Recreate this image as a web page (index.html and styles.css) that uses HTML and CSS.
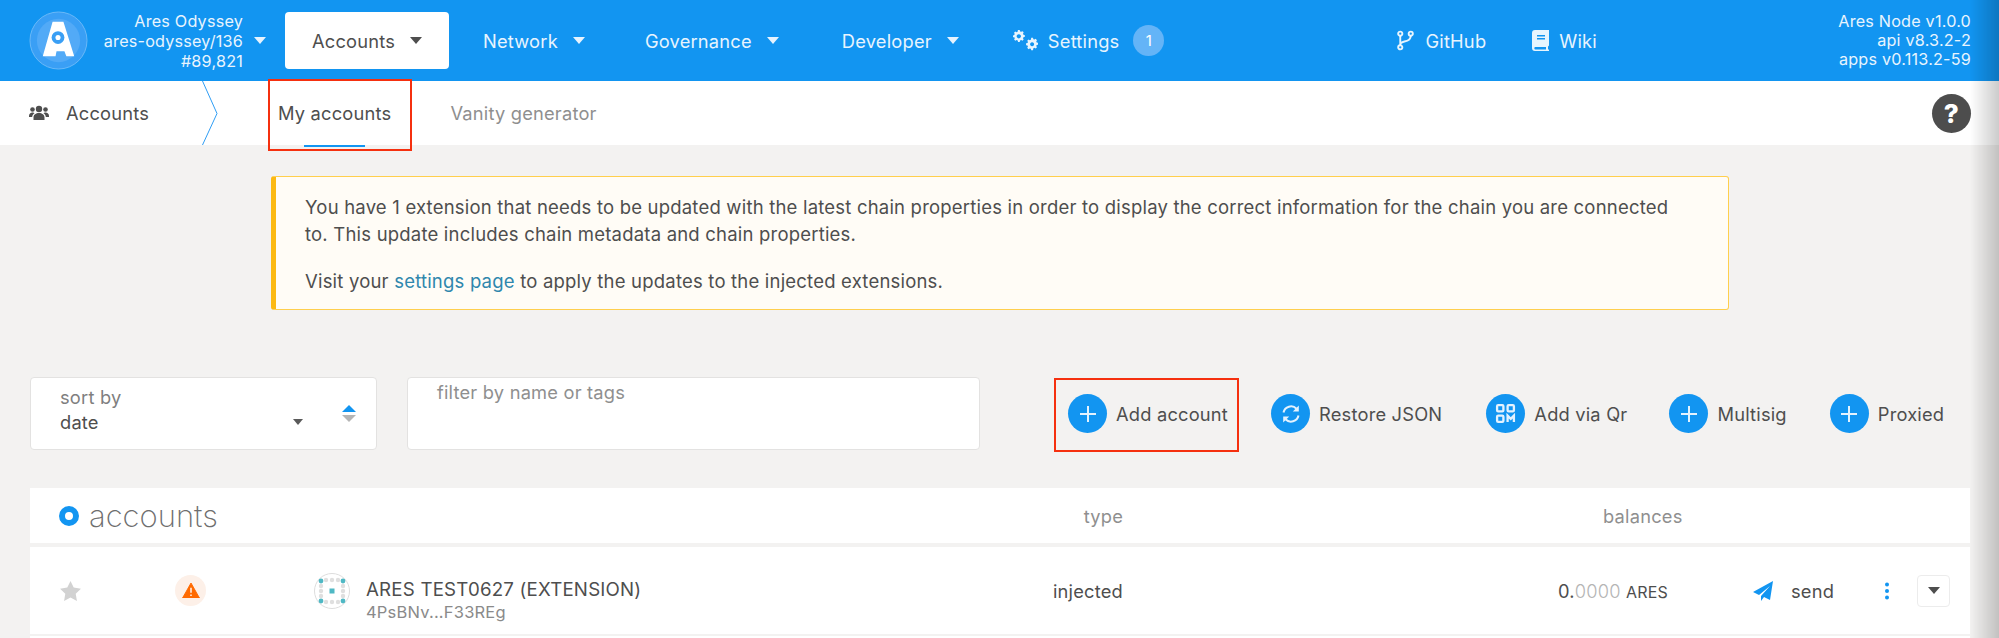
FILE: index.html
```html
<!DOCTYPE html>
<html>
  <head>
    <title>Accounts</title>
    <meta charset="utf-8"/>
    <link rel="stylesheet" href="styles.css">
  </head>
  <body>
    <header class="top">
      <svg class="logo" viewBox="0 0 60 60">
        <circle cx="30" cy="30" r="29" fill="#3a9ff5" stroke="#7cc0f8" stroke-width="0.8"/>
        <circle cx="30" cy="30" r="22" fill="#52aaf7"/>
        <path d="M24 11H35L46 46H38L36 41H28L27 46H14z" fill="#fff"/>
        <circle cx="29.500" cy="27" r="6.500" fill="#3a9ff5"/>
        <circle cx="29.500" cy="27" r="2.600" fill="#fff"/>
      </svg>
      <div class="chain">
        <div>Ares Odyssey</div>
        <div>ares-odyssey/136</div>
        <div>#89,821</div>
      </div>
      <i class="caret chain-caret"></i>
      <a class="menu active">Accounts <i class="caret"></i></a>
      <a class="menu menu-network">Network <i class="caret"></i></a>
      <a class="menu menu-gov">Governance <i class="caret"></i></a>
      <a class="menu menu-dev">Developer <i class="caret"></i></a>
      <a class="menu menu-settings">
        <svg class="gears" viewBox="0 0 25 22" fill="#fff" fill-opacity=".9">
          <path fill-rule="evenodd" d="M8 1l1.400.2.5 1.700 1.300.6 1.600-.8 1.400 1.400-.8 1.600.6 1.300 1.700.5v2l-1.700.5-.6 1.300.8 1.600-1.400 1.400-1.600-.8-1.300.6-.5 1.700h-2l-.5-1.700-1.300-.6-1.600.8-1.400-1.400.8-1.600-.6-1.300L1 9.900v-2l1.700-.5.6-1.300-.8-1.600 1.400-1.400 1.600.8 1.300-.6L7.300 1zM8.300 6.300a2.600 2.600 0 1 0 .01 0z" transform="translate(-1 -1) scale(.82)"/>
          <path fill-rule="evenodd" d="M18 8h2l.4 1.600 1.200.5 1.400-.8 1.400 1.400-.8 1.400.5 1.200 1.600.4v2l-1.600.4-.5 1.200.8 1.400-1.400 1.400-1.400-.8-1.200.5L20 22h-2l-.4-1.600-1.200-.5-1.400.8-1.400-1.400.8-1.400-.5-1.200-1.600-.4v-2l1.600-.4.5-1.200-.8-1.400 1.400-1.400 1.400.8 1.200-.5zM19 13a2.200 2.200 0 1 0 .01 0z" transform="translate(2 0.500) scale(.9)"/>
        </svg>
        Settings
        <span class="badge">1</span>
      </a>
      <a class="menu menu-github">
        <svg class="link-icon" viewBox="0 0 16 20" fill="none" stroke="#fff" stroke-opacity=".9" stroke-width="1.800">
          <circle cx="3" cy="3.500" r="2"/><circle cx="3" cy="16.500" r="2"/><circle cx="13" cy="3.500" r="2"/>
          <path d="M3 5.500v9M13 5.500c0 4-3 5-6 5.500-2 .4-4 1-4 3"/>
        </svg>
        GitHub
      </a>
      <a class="menu menu-wiki">
        <svg class="link-icon" viewBox="0 0 17 21" fill="#fff" fill-opacity=".9">
          <path fill-rule="evenodd" d="M3 0h14v15.500l-1 1v2.500l1 1V21H3a3 3 0 0 1-3-3V3a3 3 0 0 1 3-3zM5 5v1.500h8V5zM5 8v1.500h8V8zM3 17a1.500 1.500 0 0 0 0 2.500h11V17z"/>
        </svg>
        Wiki
      </a>
      <div class="version">
        <div>Ares Node v1.0.0</div>
        <div>api v8.3.2-2</div>
        <div>apps v0.113.2-59</div>
      </div>
    </header>

    <nav class="sub">
      <div class="crumb">
        <svg class="users" viewBox="0 0 20 16" fill="#4e4e4e">
          <circle cx="10" cy="4" r="3.200"/><circle cx="3.500" cy="4.500" r="2.300"/><circle cx="16.500" cy="4.500" r="2.300"/>
          <path d="M4.500 15v-2.500C4.500 9.500 7 8 10 8s5.500 1.500 5.500 4.500V15zM0 11c0-2 1.500-3.500 3.500-3.500 1 0 1.500.3 2 .7C4 9.200 3.200 10.500 3.200 12H0zM20 11c0-2-1.500-3.500-3.500-3.500-1 0-1.500.3-2 .7 1.500 1 2.300 2.300 2.300 3.800H20z"/>
        </svg>
        Accounts
      </div>
      <svg class="chevron" viewBox="0 0 16 64" fill="none" stroke="#2f9df4" stroke-width="1">
        <path d="M.5 0L15 32.500.5 64"/>
      </svg>
      <a class="tab tab-current">My accounts<span class="mark"></span></a>
      <a class="tab tab-muted">Vanity generator</a>
      <div class="help">?</div>
      <div class="redbox redbox-tab"></div>
    </nav>

    <main class="content">
      <section class="notice">
        <p>You have 1 extension that needs to be updated with the latest chain properties in order to display the correct information for the chain you are connected to. This update includes chain metadata and chain properties.</p>
        <p>Visit your <a class="notice-link">settings page</a> to apply the updates to the injected extensions.</p>
      </section>

      <section class="controls">
        <div class="field sort">
          <div class="sort-text">
            <label>sort by</label>
            <div class="sort-value">date <i class="caret caret-small"></i></div>
          </div>
          <div class="arrows"><i class="arrow-up"></i><i class="arrow-down"></i></div>
        </div>
        <div class="field filter">filter by name or tags</div>
        <div class="buttons">
          <a class="btn btn-add"><span class="disc"><svg viewBox="0 0 20 20"><path d="M10 2v16M2 10h16"/></svg></span>Add account</a>
          <a class="btn btn-restore"><span class="disc">
            <svg viewBox="0 0 20 20" class="sync"><path d="M2.500 8.500A7.700 7.700 0 0 1 15.500 4.700M17.500 11.500A7.700 7.700 0 0 1 4.500 15.300"/><path class="fill" d="M17.800 1.500v6h-6zM2.200 18.500v-6h6z"/></svg>
          </span>Restore JSON</a>
          <a class="btn btn-qr"><span class="disc">
            <svg viewBox="0 0 20 20" class="qr"><rect x="2" y="2" width="6" height="6" rx="1"/><rect x="12" y="2" width="6" height="6" rx="1"/><rect x="2" y="12" width="6" height="6" rx="1"/><path d="M12 18v-6l3 3 3-3v6"/></svg>
          </span>Add via Qr</a>
          <a class="btn btn-multi"><span class="disc"><svg viewBox="0 0 20 20"><path d="M10 2v16M2 10h16"/></svg></span>Multisig</a>
          <a class="btn btn-proxy"><span class="disc"><svg viewBox="0 0 20 20"><path d="M10 2v16M2 10h16"/></svg></span>Proxied</a>
          <div class="redbox redbox-add"></div>
        </div>
      </section>

      <section class="table">
        <div class="grid head">
          <div class="title"><i class="ring"></i>accounts</div>
          <div class="col-type">type</div>
          <div class="col-bal">balances</div>
        </div>
        <div class="grid row">
          <svg class="star" viewBox="0 0 24 23" fill="#d2d2d2"><path d="M12 0l3.700 7.600 8.300 1.200-6 5.900 1.400 8.300-7.400-3.900L4.600 23 6 14.700 0 8.800l8.300-1.200z"/></svg>
          <span class="warn">
            <svg viewBox="0 0 18 16"><path d="M9 0l9 16H0z" fill="#ff6a00" stroke="#ff6a00" stroke-linejoin="round"/><path d="M9 5v5.500M9 12.300v1.500" stroke="#fff" stroke-width="1.500"/></svg>
          </span>
          <div class="who">
            <svg class="identicon" viewBox="0 0 36 36">
              <circle cx="18" cy="18" r="17.500" fill="#fff" stroke="#ddd"/>
              <g fill="#dfdfdf">
                <circle cx="12" cy="7" r="2.200"/><circle cx="18" cy="7" r="2.200"/><circle cx="24" cy="7" r="2.200"/>
                <circle cx="7" cy="13" r="2.200"/><circle cx="29" cy="13" r="2.200"/><circle cx="7" cy="18" r="2.200"/><circle cx="29" cy="18" r="2.200"/><circle cx="7" cy="23" r="2.200"/><circle cx="29" cy="23" r="2.200"/>
                <circle cx="12" cy="29" r="2.200"/><circle cx="18" cy="29" r="2.200"/><circle cx="24" cy="29" r="2.200"/>
              </g>
              <g fill="#4fb8c4">
                <circle cx="7" cy="8" r="2.400"/><circle cx="29" cy="8" r="2.400"/><circle cx="7" cy="28" r="2.400"/><circle cx="29" cy="28" r="2.400"/>
                <rect x="15.500" y="15.500" width="5" height="5"/>
              </g>
            </svg>
            <div>
              <div class="name">ARES TEST0627 (EXTENSION)</div>
              <div class="addr">4PsBNv...F33REg</div>
            </div>
          </div>
          <div class="col-type kind">injected</div>
          <div class="amount">0.<span class="frac">0000</span> <span class="unit">ARES</span></div>
          <svg class="plane" viewBox="0 0 20 20" fill="#1295f1"><path d="M20 0l-3 19-6-3-3 4v-5l9-10-11 9-6-3z"/></svg>
          <a class="send">send</a>
          <svg class="dots" viewBox="0 0 6 18" fill="#1295f1"><circle cx="3" cy="2.500" r="2"/><circle cx="3" cy="9" r="2"/><circle cx="3" cy="15.500" r="2"/></svg>
          <span class="more"><i class="caret caret-dark"></i></span>
        </div>
        <div class="row-next"></div>
      </section>
    </main>
    <div class="edge"></div>
  </body>
</html>
```

FILE: styles.css
```css
* {
  box-sizing: border-box;
}
html, body {
  height: 100%;
}
body {
  margin: 0;
  background: #f3f2f1;
  color: #4e4e4e;
  font-family: Inter, "Noto Sans", sans-serif;
  font-size: 18.300px;
  letter-spacing: .2px;
  overflow: hidden;
}
p {
  margin: 0;
}
i {
  display: inline-block;
}

.caret {
  width: 0;
  height: 0;
  border-left: 6.500px solid transparent;
  border-right: 6.500px solid transparent;
  border-top: 7px solid #e6f3fe;
}

/* top bar */
.top {
  display: flex;
  align-items: center;
  height: 81px;
  padding-left: 29px;
  background: #1295f1;
  color: #e8f4fe;
}
.logo {
  width: 59px;
  height: 59px;
  flex: none;
}
.chain {
  width: 155px;
  text-align: right;
  font-size: 16.200px;
  line-height: 20px;
}
.chain-caret {
  margin-left: 11px;
  margin-right: 19px;
}
.menu {
  display: flex;
  align-items: center;
  gap: 15px;
  white-space: nowrap;
}
.menu.active {
  width: 164px;
  height: 57px;
  padding-left: 27px;
  background: #fff;
  border-radius: 4px;
  color: #4e4e4e;
}
.menu.active .caret {
  border-top-color: #4e4e4e;
}
.menu-network {
  margin-left: 34px;
}
.menu-gov {
  margin-left: 60px;
}
.menu-dev {
  margin-left: 63px;
}
.menu-settings {
  margin-left: 54px;
  gap: 10px;
}
.gears {
  width: 25px;
  height: 22px;
}
.badge {
  width: 31px;
  height: 31px;
  margin-left: 4px;
  border-radius: 50%;
  background: #64b4f7;
  color: #fff;
  font-size: 15px;
  line-height: 31px;
  text-align: center;
}
.menu-github {
  margin-left: 233px;
  gap: 11px;
}
.menu-wiki {
  margin-left: 46px;
  gap: 10px;
}
.link-icon {
  width: 17px;
  height: 21px;
}
.version {
  margin-left: auto;
  margin-right: 28px;
  text-align: right;
  font-size: 16.200px;
  line-height: 19px;
}

/* second bar */
.sub {
  position: relative;
  display: flex;
  align-items: center;
  height: 64px;
  padding-left: 29px;
  background: #fff;
}
.crumb {
  display: flex;
  align-items: center;
  gap: 17px;
  width: 173px;
}
.users {
  width: 20px;
  height: 16px;
}
.chevron {
  width: 16px;
  height: 64px;
  flex: none;
}
.tab {
  position: relative;
  display: flex;
  align-items: center;
  height: 64px;
  white-space: nowrap;
}
.tab-current {
  margin-left: 60px;
}
.tab-muted {
  margin-left: 59px;
  color: #8f8f8f;
}
.mark {
  position: absolute;
  left: 26px;
  top: 64px;
  width: 61px;
  height: 2px;
  background: #1295f1;
}
.help {
  width: 39px;
  height: 39px;
  margin-left: auto;
  margin-right: 28px;
  border-radius: 50%;
  background: #4d4d4d;
  color: #fff;
  font-size: 26px;
  font-weight: 800;
  line-height: 39px;
  text-align: center;
}
.redbox {
  position: absolute;
  border: 2px solid #f5300f;
}
.redbox-tab {
  left: 268px;
  top: -2px;
  width: 144px;
  height: 72px;
}

/* notice */
.content {
  padding: 31px 29px 0 30px;
}
.notice {
  width: 1458px;
  height: 134px;
  margin-left: 241px;
  padding: 17px 48px 0 29px;
  background: #fffcf6;
  border: 1px solid #ffcf4d;
  border-left: 5px solid #fcb913;
  border-radius: 3px;
  font-size: 18.500px;
  line-height: 27px;
}
.notice p + p {
  margin-top: 20px;
}
.notice-link {
  color: #2f87ad;
}

/* sort, filter, buttons */
.controls {
  position: relative;
  display: flex;
  align-items: flex-start;
  height: 73px;
  margin-top: 67px;
}
.field {
  height: 73px;
  background: #fff;
  border: 1px solid #e3e2e1;
  border-radius: 4px;
}
.sort {
  display: flex;
  width: 347px;
  padding: 8px 0 0 29px;
}
.sort-text {
  width: 243px;
}
.sort-text label {
  display: block;
  color: #7f7f7f;
  line-height: 22px;
}
.sort-value {
  display: flex;
  justify-content: space-between;
  align-items: center;
  height: 28px;
  line-height: 28px;
}
.caret-small {
  border-left-width: 5.500px;
  border-right-width: 5.500px;
  border-top: 6px solid #5a5a5a;
}
.arrows {
  display: flex;
  flex-direction: column;
  gap: 3px;
  margin: 19px 0 0 39px;
}
.arrows i {
  width: 0;
  height: 0;
  border-left: 7px solid transparent;
  border-right: 7px solid transparent;
}
.arrow-up {
  border-bottom: 7px solid #1295f1;
}
.arrow-down {
  border-top: 7px solid #b5b5b5;
}
.filter {
  width: 573px;
  margin-left: 30px;
  padding: 3px 0 0 29px;
  color: #8f8f8f;
  line-height: 22px;
}
.buttons {
  display: flex;
  align-items: center;
  height: 73px;
  margin-left: 88px;
}
.btn {
  display: flex;
  align-items: center;
  gap: 9px;
  white-space: nowrap;
}
.disc {
  display: flex;
  align-items: center;
  justify-content: center;
  width: 39px;
  height: 39px;
  border-radius: 50%;
  background: #1295f1;
}
.disc svg {
  width: 20px;
  height: 20px;
  fill: none;
  stroke: #e4f2fe;
  stroke-width: 2;
}
.disc svg.qr {
  width: 21px;
  height: 21px;
  stroke-width: 2.200;
}
.disc .fill {
  fill: #e4f2fe;
  stroke: none;
}
.btn-restore {
  margin-left: 43px;
}
.btn-qr {
  margin-left: 44px;
}
.btn-multi {
  margin-left: 42px;
}
.btn-proxy {
  margin-left: 43px;
}
.redbox-add {
  left: 1024px;
  top: 1px;
  width: 185px;
  height: 74px;
}

/* accounts table */
.table {
  width: 1940px;
  margin-top: 38px;
}
.grid {
  display: grid;
  grid-template-columns: 145px 139px 738px 71px 545px 123px 93px 33px 1fr;
  align-items: center;
  background: #fff;
}
.head {
  grid-template-columns: 1022px 71px 1fr;
  height: 55px;
}
.title {
  display: flex;
  align-items: center;
  gap: 10px;
  padding-left: 29px;
  color: #6e6e6e;
  font-size: 31px;
  font-weight: 200;
  letter-spacing: 0;
}
.ring {
  width: 20px;
  height: 20px;
  border: 6.500px solid #1295f1;
  border-radius: 50%;
}
.col-type {
  text-align: right;
  white-space: nowrap;
}
.head .col-type,
.head .col-bal {
  color: #8f8f8f;
}
.head .col-bal {
  padding-left: 480px;
}
.row {
  height: 87px;
  margin-top: 4px;
}
.row-next {
  height: 10px;
  margin-top: 2px;
  background: #fff;
}
.star {
  width: 21px;
  height: 20px;
  margin-left: 30px;
}
.warn {
  display: flex;
  align-items: center;
  justify-content: center;
  width: 31px;
  height: 31px;
  border-radius: 50%;
  background: #fdf0e8;
}
.warn svg {
  width: 18px;
  height: 15px;
}
.who {
  display: flex;
  align-items: center;
  gap: 16px;
}
.identicon {
  width: 36px;
  height: 36px;
  flex: none;
}
.name {
  margin-top: 18px;
  font-size: 18.700px;
  line-height: 24px;
}
.addr {
  color: #8a8a8a;
  font-size: 16.500px;
  line-height: 20px;
}
.amount {
  text-align: right;
  white-space: nowrap;
}
.frac {
  color: #b5b5b5;
  font-weight: 300;
}
.unit {
  font-size: 16px;
}
.plane {
  width: 20px;
  height: 20px;
  margin-left: 85px;
}
.dots {
  width: 6px;
  height: 18px;
}
.more {
  display: flex;
  align-items: center;
  justify-content: center;
  width: 33px;
  height: 32px;
  border: 1px solid #ececec;
  border-radius: 4px;
}
.caret-dark {
  border-top-color: #4e4e4e;
}

/* shaded strip at the right edge of the window */
.edge {
  position: fixed;
  top: 0;
  right: 0;
  bottom: 0;
  width: 29px;
  background: linear-gradient(to right, rgba(0, 0, 0, 0), rgba(0, 0, 0, .2));
}
```
